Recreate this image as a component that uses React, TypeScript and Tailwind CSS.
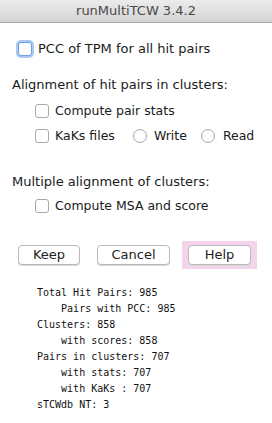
import React from 'react'

const Box = ({ focus }: { focus?: boolean }) => (
  <span
    className={
      'inline-block w-[14px] h-[14px] rounded-[3px] bg-white border shrink-0 ' +
      (focus
        ? 'border-[#6d9fe6] shadow-[0_0_0_2px_#a9c8f3]'
        : 'border-[#a8a8a8]')
    }
  />
)

const Radio = () => (
  <span className="inline-block w-[14px] h-[14px] rounded-full bg-white border border-[#a8a8a8] shrink-0" />
)

const Button = ({ label, w }: { label: string; w: string }) => (
  <div
    className={
      'h-[20px] rounded-[4px] bg-white border border-[#b9b9b9] shadow-[0_1px_0_#d8d8d8] flex items-center justify-center text-[13px] text-[#222] ' +
      w
    }
  >
    {label}
  </div>
)

const stats = [
  'Total Hit Pairs: 985',
  '    Pairs with PCC: 985',
  'Clusters: 858',
  '    with scores: 858',
  'Pairs in clusters: 707',
  '    with stats: 707',
  '    with KaKs : 707',
  'sTCWdb NT: 3',
]

export default function App() {
  return (
    <div
      className="w-[272px] h-[423px] bg-white overflow-hidden text-[13px] text-[#1a1a1a]"
      style={{ fontFamily: '"DejaVu Sans", Verdana, sans-serif' }}
    >
      <div className="h-[23px] bg-gradient-to-b from-[#ececec] to-[#d4d4d4] border-b border-[#a9a9a9] flex items-center justify-center text-[13px] text-[#4a4a4a]">
        runMultiTCW 3.4.2
      </div>

      <div className="mt-[16px] h-[20px] flex items-center pl-[18px] gap-[6px]">
        <Box focus />
        <span>PCC of TPM for all hit pairs</span>
      </div>

      <div className="mt-[16px] h-[20px] flex items-center pl-[12px]">
        Alignment of hit pairs in clusters:
      </div>
      <div className="mt-[6px] h-[20px] flex items-center pl-[35px] gap-[6px] text-[12.5px]">
        <Box />
        <span>Compute pair stats</span>
      </div>
      <div className="mt-[5px] h-[20px] flex items-center pl-[35px] text-[12.5px]">
        <Box />
        <span className="ml-[6px]">KaKs files</span>
        <span className="ml-[18px] flex">
          <Radio />
        </span>
        <span className="ml-[7px]">Write</span>
        <span className="ml-[14px] flex">
          <Radio />
        </span>
        <span className="ml-[8px]">Read</span>
      </div>

      <div className="mt-[26px] h-[20px] flex items-center pl-[12px]">
        Multiple alignment of clusters:
      </div>
      <div className="mt-[4px] h-[20px] flex items-center pl-[35px] gap-[6px] text-[12.5px]">
        <Box />
        <span>Compute MSA and score</span>
      </div>

      <div className="mt-[25px] h-[28px] flex items-center pl-[18px]">
        <Button label="Keep" w="w-[62px]" />
        <Button label="Cancel" w="w-[73px] ml-[17px]" />
        <div className="ml-[12px] h-[28px] w-[75px] bg-[#f4d4ea] flex items-center justify-center">
          <Button label="Help" w="w-[63px]" />
        </div>
      </div>

      <div
        className="mt-[16px] pl-[37px] text-[10px] leading-[16px] text-[#111] whitespace-pre"
        style={{ fontFamily: '"DejaVu Sans Mono", monospace' }}
      >
        {stats.map((s, i) => (
          <div key={i}>{s}</div>
        ))}
      </div>
    </div>
  )
}
